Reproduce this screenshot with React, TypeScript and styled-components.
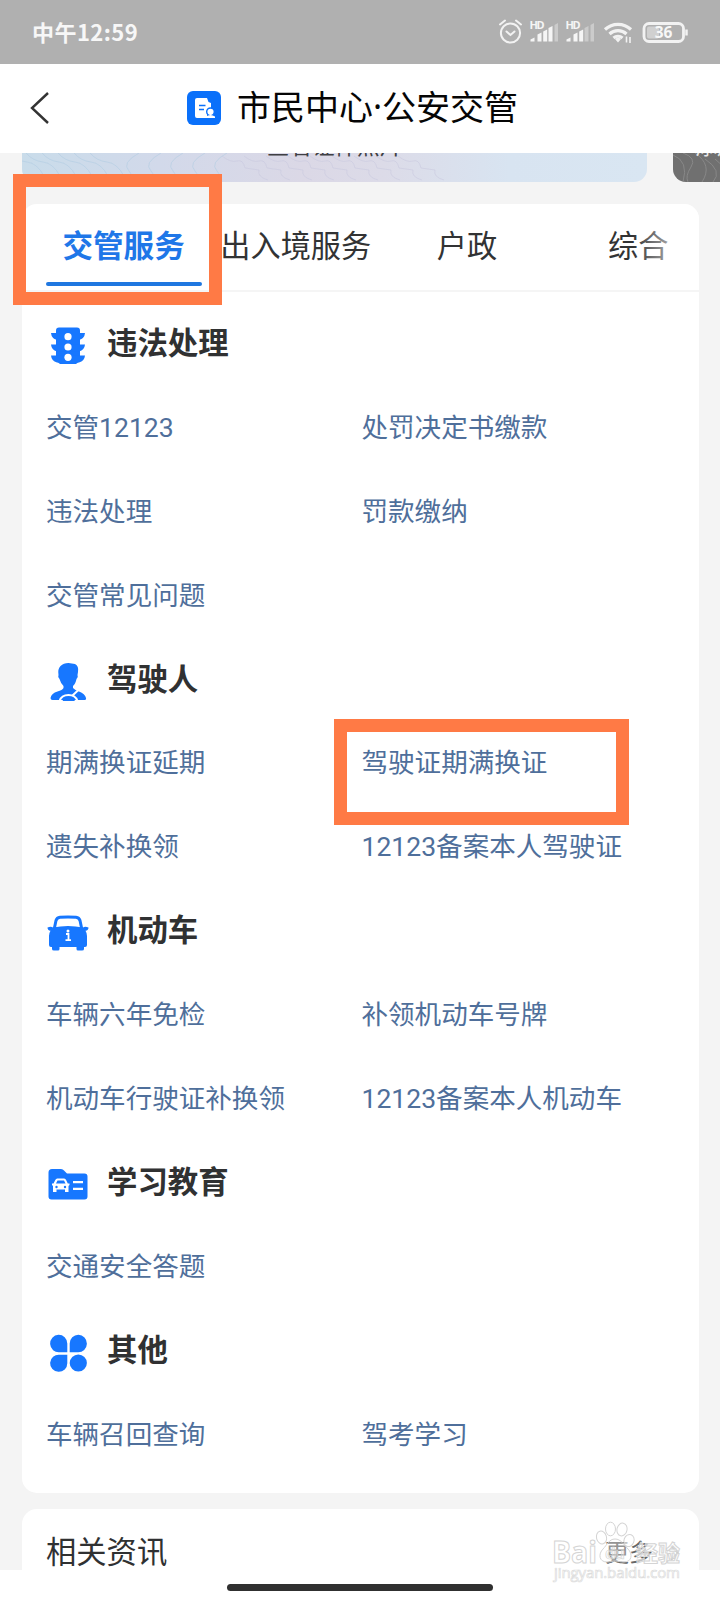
import React from "react";
import styled, { createGlobalStyle } from "styled-components";

const GlobalStyle = createGlobalStyle`
  *, *::before, *::after { box-sizing: border-box; }
  body {
    margin: 0;
    background: #fff;
    font-family: Roboto, "Noto Sans CJK SC", sans-serif;
    color: #303132;
  }
  svg { display: block; flex: none; }
`;

const Screen = styled.div`
  position: relative;
  width: 720px;
  height: 1600px;
  overflow: hidden;
  display: flex;
  flex-direction: column;
  background: #fff;
`;

const StatusBar = styled.div`
  height: 64px;
  flex: none;
  background: #b0b0b0;
  display: flex;
  align-items: center;
  justify-content: space-between;
  padding: 0 29px 0 32px;
`;

const Clock = styled.span`
  font: 700 22px/30px "Noto Sans CJK SC", sans-serif;
  letter-spacing: 0.45px;
  margin-top: -3px;
  color: #f7f7f7;
`;

const Header = styled.header`
  height: 89px;
  flex: none;
  display: flex;
  align-items: center;
  padding-left: 30px;
  padding-bottom: 2px;
`;

const Logo = styled.div`
  margin-left: 138px;
  margin-right: 16px;
`;

const Title = styled.h1`
  margin: -4px 0 0;
  font: 400 34px/50px "Noto Sans CJK SC", sans-serif;
  color: #050505;
  white-space: nowrap;
  display: flex;
`;

const Dot = styled.span`
  width: 9px;
  display: flex;
  justify-content: center;
  font-family: "Noto Sans", sans-serif;
`;

const Body = styled.main`
  height: 1417px;
  flex: none;
  overflow: hidden;
  background: #f4f4f4;
  padding-left: 22px;
`;

const BannerStrip = styled.div`
  display: flex;
  gap: 26px;
  height: 29px;
  margin-bottom: 22px;
  overflow: hidden;
`;

const Banner = styled.div<{ $dark?: boolean }>`
  flex: none;
  width: ${(p) => (p.$dark ? 120 : 625)}px;
  height: 29px;
  overflow: hidden;
  display: grid;
  border-radius: 0 0 13px 13px;
  background: ${(p) =>
    p.$dark ? "#707070" : "linear-gradient(90deg, #c9dcea 0%, #d2d9ea 22%, #dbd8e6 45%, #dcdbe8 58%, #d8e4f1 78%, #d9e6f2 100%)"};
  > * { grid-area: 1 / 1; }
`;

const BannerText = styled.span<{ $light?: boolean }>`
  justify-self: ${(p) => (p.$light ? "start" : "center")};
  margin-left: ${(p) => (p.$light ? "22px" : "0")};
  margin-top: -22px;
  font-size: ${(p) => (p.$light ? 22 : 22.6)}px;
  line-height: 32px;
  color: ${(p) => (p.$light ? "#e8e8e8" : "#3f4044")};
  white-space: nowrap;
`;

const Card = styled.section<{ $height: number }>`
  width: 677px;
  height: ${(p) => p.$height}px;
  background: #fff;
  border-radius: 15px;
  margin-bottom: 16px;
`;

const Tabs = styled.nav`
  position: relative;
  display: flex;
  height: 88px;
  padding-left: 17px;
  border-bottom: 2px solid #f5f5f5;
  border-radius: 15px 15px 0 0;
  overflow: hidden;
  &::after {
    content: "";
    position: absolute;
    right: 0;
    top: 0;
    width: 66px;
    height: 84px;
    background: linear-gradient(90deg, rgba(255, 255, 255, 0), #fff);
  }
`;

const Tab = styled.div<{ $active?: boolean }>`
  flex: 0 0 171.2px;
  display: flex;
  flex-direction: column;
  align-items: center;
  justify-content: space-between;
  padding: 21px 0 4px;
  margin-left: ${(p) => (p.$active ? -1 : 0)}px;
  margin-right: ${(p) => (p.$active ? 1 : 0)}px;
  font-size: ${(p) => (p.$active ? 30.6 : 30.2)}px;
  line-height: 44px;
  font-weight: ${(p) => (p.$active ? 700 : 400)};
  color: ${(p) => (p.$active ? "#1f77e8" : "#323334")};
  white-space: nowrap;
  &::after {
    content: "";
    width: 156px;
    height: 4px;
    border-radius: 2px;
    background: ${(p) => (p.$active ? "#1f77e0" : "transparent")};
  }
`;

const Groups = styled.div`
  padding: 10px 0 0 24px;
`;

const GroupHead = styled.h2`
  margin: 0;
  height: 83.9px;
  display: flex;
  align-items: center;
  gap: 17px;
  font-size: 30.4px;
  line-height: 44px;
  font-weight: 700;
  color: #303132;
  svg { margin-top: 5px; }
`;

const Links = styled.div`
  display: grid;
  grid-template-columns: 315.5px 1fr;
  grid-auto-rows: 83.9px;
  align-items: center;
`;

const Link = styled.a`
  font-size: 26.55px;
  line-height: 40px;
  color: #4f6f9b;
  white-space: nowrap;
`;

const NewsHead = styled.div`
  display: flex;
  justify-content: space-between;
  align-items: center;
  padding: 22px 20px 0 24px;
  font-size: 30.3px;
  line-height: 44px;
`;

const More = styled.span`
  display: flex;
  align-items: center;
  gap: 17px;
  font-size: 24px;
  color: #666;
`;

const HomeArea = styled.div`
  height: 30px;
  flex: none;
  display: flex;
  justify-content: center;
  align-items: flex-start;
  padding-top: 14px;
  &::after {
    content: "";
    width: 266px;
    height: 7px;
    border-radius: 4px;
    background: #303030;
  }
`;

const Marker = styled.div<{ $x: number; $y: number; $w: number; $h: number }>`
  position: absolute;
  left: ${(p) => p.$x}px;
  top: ${(p) => p.$y}px;
  width: ${(p) => p.$w}px;
  height: ${(p) => p.$h}px;
  border: 13px solid #ff7a45;
`;

const Watermark = styled.svg`
  position: absolute;
  left: 545px;
  top: 1515px;
`;

const StatusIcons = () => (
  <svg width="200" height="32" viewBox="0 0 200 32" fill="none" stroke="#f2f2f2">
    <g strokeWidth="2" transform="translate(7 0)">
      <circle cx="12.5" cy="17" r="9.6" />
      <path d="M2 8.5 7 4.500M18 4.500l5 4M8.500 15.500l4 3.500 4-3.500" strokeLinecap="round" />
    </g>
    {[39.5, 75.5].map((x, n) => (
      <g key={x} stroke="none" fill="#f5f5f5">
        <text x={x - 1} y="13" fontSize="11" fontWeight="700" fontFamily="Noto Sans" textLength="15">HD</text>
        <path d={`M${x} 25.500v-2l4-2v4z`} />
        <path d={`M${x + 7} 18.500l4-2v9h-4z`} />
        <path d={`M${x + 12.700} 15.500l4-2v12h-4z`} />
        <path d={`M${x + 18} 12l4-2v15.500h-4z`} fillOpacity={n ? 0.4 : 1} />
        <path d={`M${x + 24} 9l3.500-2v18.500h-3.500z`} fillOpacity="0.4" />
      </g>
    ))}
    <g strokeWidth="3.200">
      <path d="M114 13.500a19 19 0 0 1 26 0M118.500 18a12.500 12.500 0 0 1 17 0M122.500 22a7 7 0 0 1 9 0" />
      <path d="M124 23q3-2.500 6 0l-3 3.500z" fill="#f2f2f2" stroke="none" />
      <path d="M135.500 20.500v6M139 21v6" strokeWidth="1.600" />
    </g>
    <rect x="153" y="7.500" width="39.500" height="18" rx="5" strokeWidth="2.800" />
    <rect x="156" y="10.500" width="12" height="12" rx="2" fill="#d0d0d0" stroke="none" />
    <path d="M195.500 13.500v6" strokeWidth="2.500" />
    <text x="172.500" y="22" textAnchor="middle" fontSize="15.500" fontWeight="700" fontFamily="Noto Sans" fill="#f7f7f7" stroke="none">36</text>
  </svg>
);

const LogoIcon = () => (
  <svg width="34" height="34" viewBox="0 0 34 34">
    <rect width="34" height="34" rx="6" fill="#0a70fa" />
    <path d="M8 9q0-2 2-2h10l1.500 4 2.500 1v5.500l-4 3.500v6H10q-2 0-2-2z" fill="#fff" />
    <path d="M12 14.500h6.500M12 18.500h5" stroke="#0a70fa" strokeWidth="1.600" />
    <circle cx="23.500" cy="20.800" r="3.800" fill="#fff" stroke="#0a70fa" strokeWidth="1.400" />
    <path d="M19 27v-1.500q4.500-3 9 0V27z" fill="#fff" />
  </svg>
);

const TrafficLight = () => (
  <svg width="44" height="40" viewBox="0 0 44 40">
    <g fill="#1777ff">
      <path d="M13 1.500h18q3 0 3 3V35l-4 3H14l-4-3V4.500q0-3 3-3z" />
      <path d="M5 7h34q-.5 5.500-6 7H11Q5.500 12.500 5 7zM5 18.500h34q-.5 5.500-6 7H11q-5.500-1.500-6-7zM5 29.500h34q-.5 5.500-6 7H11q-5.500-1.500-6-7z" />
    </g>
    <g fill="#fff">
      <circle cx="22" cy="10.700" r="3.600" />
      <circle cx="22" cy="21" r="3.600" />
      <circle cx="22" cy="31.300" r="3.600" />
    </g>
  </svg>
);

const Driver = () => (
  <svg width="44" height="40" viewBox="0 0 44 40">
    <path d="M14.500 4q3-3 8-3l6.500 1q4 2 3 8l-.5 3q1 2-1 4-1 5-3.500 7v2q2 2 6 3.500 6 2 7 6.500.5 2-2 2H6.500q-2 0-2-2 1-5 7-6.500 5-1.500 6-3.500v-2q-2.500-2-4-7-2-2-1-4-1-6 2-9z" fill="#1777ff" />
    <path d="M13.500 39q2-6 9-6t9 6M26 34l8.500-8" fill="none" stroke="#fff" strokeWidth="2" />
    <path d="M16.500 39q1.500-3.500 6-3.500t6.500 3.500z" fill="#1777ff" />
  </svg>
);

const Car = () => (
  <svg width="44" height="40" viewBox="0 0 44 40">
    <path d="M8 16 10 6.500q.8-3 4-3.300 8-.4 16 0 3.200.3 4 3.300L36 16" fill="none" stroke="#1777ff" strokeWidth="3" />
    <path d="M1.500 13.500q3.500-1.500 5.500 0 15-3 30 0 2-1.500 5.500 0 0 3-3 3.200 1.500 2.300 1.500 5.300v9q0 2-2 2h-1v2q0 1.500-2 1.500h-4q-1.500 0-1.500-1.500v-2h-17v2q0 1.500-1.500 1.500H8q-2 0-2-1.500v-2H5q-2 0-2-2v-9q0-3 1.500-5.300-3-.2-3-3.200z" fill="#1777ff" />
    <path d="M20 20h2.500v6M19.500 26.200h5.500" fill="none" stroke="#fff" strokeWidth="1.800" />
    <circle cx="22" cy="17" r="1.500" fill="#fff" />
  </svg>
);

const Folder = () => (
  <svg width="44" height="40" viewBox="0 0 44 40">
    <path d="M2.500 7.500q0-3.500 3.500-3.500h9q2 0 3 1.500l3 3h17.500q3 0 3 3v20q0 3-3 3h-33q-3 0-3-3z" fill="#1777ff" />
    <path d="M7.500 18.500 9.300 15q.6-1.500 2-1.500h6.800q1.400 0 2 1.500l1.700 3.500h1.700V20l-1 1v6h-3.500v-2.500h-8.500V27H7v-6l-1-1v-1.500z" fill="#fff" />
    <path d="M10 18.500l1.500-3H18l1.500 3z" fill="#1777ff" />
    <circle cx="10.500" cy="22" r="1.200" fill="#1777ff" />
    <circle cx="19" cy="22" r="1.200" fill="#1777ff" />
    <path d="M27 17.200h10M27 23.800h10" stroke="#fff" strokeWidth="2.300" />
  </svg>
);

const Petals = () => (
  <svg width="44" height="40" viewBox="0 0 44 40">
    <g fill="#1777ff">
      <path d="M21.300 19.300H13.500a8.600 8.800 0 1 1 7.800-8.800z" />
      <path d="M23.700 19.300H32a8.600 8.800 0 1 0-8.300-8.800z" />
      <path d="M21.300 21.700H13.500a8.600 8.600 0 1 0 7.800 8.500z" />
      <circle cx="32.300" cy="30" r="8.600" />
    </g>
  </svg>
);

const BaiduMark = () => (
  <Watermark width="150" height="75" viewBox="0 0 150 75">
    <g fill="#fff" fillOpacity="0.6" stroke="#d4d4d4" strokeWidth="1">
      <ellipse cx="56.500" cy="22.500" rx="5" ry="6.500" transform="rotate(-15 56.500 22.500)" />
      <ellipse cx="65.500" cy="14" rx="5" ry="6.800" />
      <ellipse cx="77" cy="14.500" rx="5" ry="6.500" transform="rotate(12 77 14.500)" />
      <ellipse cx="84" cy="25.500" rx="5" ry="6.200" transform="rotate(20 84 25.500)" />
      <path d="M70 24c-6 0-8 6-12 10-5 5-4 13 4 13 4 0 5-1 8-1s5 1 9 1c8 0 9-8 4-13-4-4-7-10-13-10z" fillOpacity="0.3" />
      <text x="7" y="47.500" fontFamily="Open Sans" fontWeight="700" fontSize="30" textLength="45" lengthAdjust="spacingAndGlyphs">Bai</text>
      <text x="60" y="44" fontFamily="Open Sans" fontWeight="600" fontSize="17" fillOpacity="0.3" strokeWidth="0.700" textLength="20">du</text>
      <text x="91" y="45.500" fontFamily="Noto Sans CJK SC" fontWeight="700" fontSize="22" textLength="44">经验</text>
      <text x="9" y="62.500" fontFamily="Open Sans" fontWeight="400" fontSize="15" strokeWidth="0.700" stroke="#dcdcdc" textLength="126">jingyan.baidu.com</text>
    </g>
  </Watermark>
);

const groups = [
  { title: "违法处理", Icon: TrafficLight, links: ["交管12123", "处罚决定书缴款", "违法处理", "罚款缴纳", "交管常见问题"] },
  { title: "驾驶人", Icon: Driver, links: ["期满换证延期", "驾驶证期满换证", "遗失补换领", "12123备案本人驾驶证"] },
  { title: "机动车", Icon: Car, links: ["车辆六年免检", "补领机动车号牌", "机动车行驶证补换领", "12123备案本人机动车"] },
  { title: "学习教育", Icon: Folder, links: ["交通安全答题"] },
  { title: "其他", Icon: Petals, links: ["车辆召回查询", "驾考学习"] },
];

const tabs = ["交管服务", "出入境服务", "户政", "综合"];

export default function App() {
  return (
    <Screen>
      <GlobalStyle />
      <StatusBar>
        <Clock>中午12:59</Clock>
        <StatusIcons />
      </StatusBar>
      <Header>
        <svg width="19" height="34" viewBox="0 0 19 34" fill="none" stroke="#333" strokeWidth="2.400">
          <path d="M18 2 2 17l16 15" />
        </svg>
        <Logo><LogoIcon /></Logo>
        <Title>市民中心<Dot>·</Dot>公安交管</Title>
      </Header>
      <Body>
        <BannerStrip>
          <Banner>
            <svg width="625" height="29" fill="none" stroke="#b3cde2" strokeOpacity="0.600">
              {[0, 16, 32, 48, 64, 80].map((x) => (
                <path key={x} d={`M${x - 12} 0q7 8 17 9t17 14l12 6`} />
              ))}
              {[92, 114, 136, 158, 180].map((x) => (
                <path key={x} d={`M${x + 25} 0q-18 10-10 18t-6 12`} />
              ))}
              {[200, 222, 244, 266, 288, 310, 332, 354, 376].map((x) => (
                <path key={x} stroke="#c9c9df" d={`M${x} 3q9 7 15 5t8 7l14 2q-2 7 9 10`} />
              ))}
            </svg>
            <BannerText>查看证件照片</BannerText>
          </Banner>
          <Banner $dark>
            <svg width="120" height="29" fill="none" stroke="#888">
              <path d="M0 2q16 6 10 27M10 0q14 5 8 14t-3 15M22 0q18 12 7 29M32 6q18 12 8 23M42 6q14 10 9 23" />
            </svg>
            <BannerText $light>添加证件</BannerText>
          </Banner>
        </BannerStrip>
        <Card $height={1289}>
          <Tabs>
            {tabs.map((t, i) => <Tab key={t} $active={i === 0}>{t}</Tab>)}
          </Tabs>
          <Groups>
            {groups.map(({ title, Icon, links }) => (
              <React.Fragment key={title}>
                <GroupHead><Icon />{title}</GroupHead>
                <Links>{links.map((l) => <Link key={l}>{l}</Link>)}</Links>
              </React.Fragment>
            ))}
          </Groups>
        </Card>
        <Card $height={90}>
          <NewsHead>
            相关资讯
            <More>
              更多
              <svg width="9" height="16" viewBox="0 0 9 16" fill="none" stroke="#ccc" strokeWidth="1.800"><path d="m1 1 7 7-7 7" /></svg>
            </More>
          </NewsHead>
        </Card>
      </Body>
      <HomeArea />
      <Marker $x={13} $y={174} $w={209} $h={131} />
      <Marker $x={334} $y={719} $w={295} $h={106} />
      <BaiduMark />
    </Screen>
  );
}
